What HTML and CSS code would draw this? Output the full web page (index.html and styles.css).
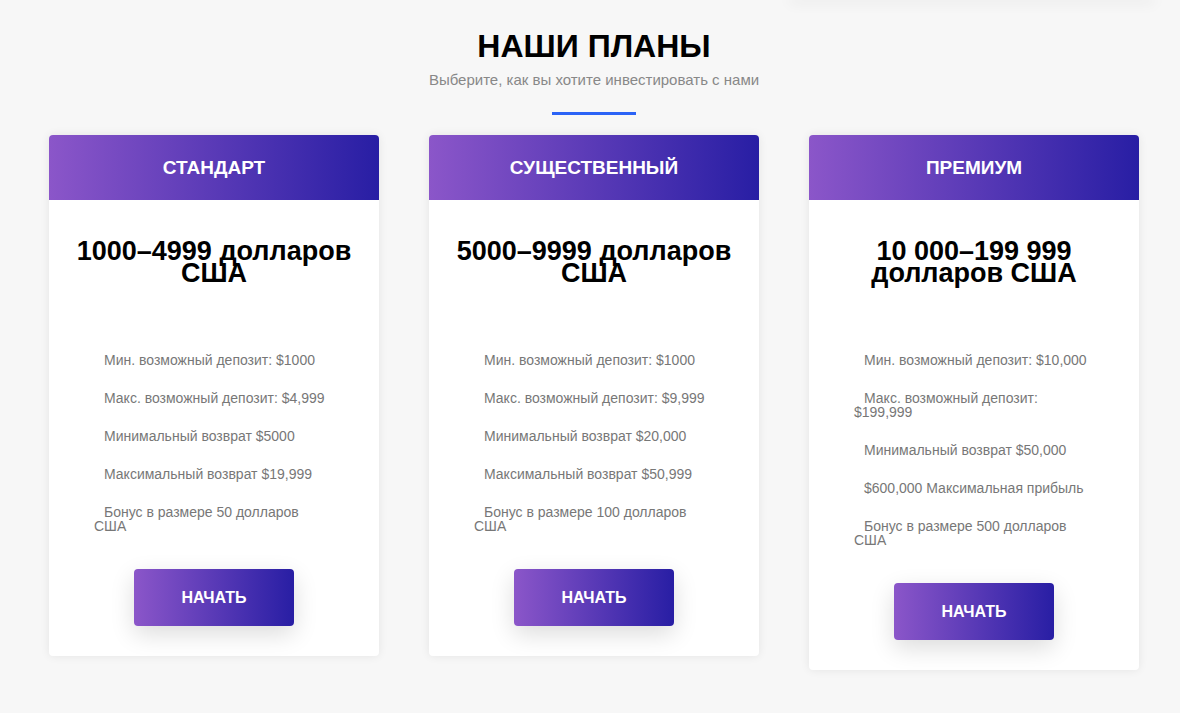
FILE: index.html
```html
<!DOCTYPE html>
<html lang="ru">
<head>
	<meta charset="utf-8">
	<title>Наши планы</title>
	<link rel="stylesheet" href="styles.css">
</head>
<body>

<section class="plans">
	<div class="top-strip"><div class="top-shadow"></div></div>

	<h2 class="plans-title">НАШИ ПЛАНЫ</h2>
	<p class="plans-sub">Выберите, как вы хотите инвестировать с нами</p>
	<div class="plans-line"></div>

	<div class="plans-row">

		<div class="plan-card">
			<div class="plan-head">СТАНДАРТ</div>
			<h3 class="plan-price">1000–4999 долларов США</h3>
			<ul class="plan-list">
				<li>Мин. возможный депозит: $1000</li>
				<li>Макс. возможный депозит: $4,999</li>
				<li>Минимальный возврат $5000</li>
				<li>Максимальный возврат $19,999</li>
				<li>Бонус в размере 50 долларов США</li>
			</ul>
			<a class="plan-btn" href="#">НАЧАТЬ</a>
		</div>

		<div class="plan-card">
			<div class="plan-head">СУЩЕСТВЕННЫЙ</div>
			<h3 class="plan-price">5000–9999 долларов США</h3>
			<ul class="plan-list">
				<li>Мин. возможный депозит: $1000</li>
				<li>Макс. возможный депозит: $9,999</li>
				<li>Минимальный возврат $20,000</li>
				<li>Максимальный возврат $50,999</li>
				<li>Бонус в размере 100 долларов США</li>
			</ul>
			<a class="plan-btn" href="#">НАЧАТЬ</a>
		</div>

		<div class="plan-card">
			<div class="plan-head">ПРЕМИУМ</div>
			<h3 class="plan-price">10 000–199 999 долларов США</h3>
			<ul class="plan-list">
				<li>Мин. возможный депозит: $10,000</li>
				<li>Макс. возможный депозит: $199,999</li>
				<li>Минимальный возврат $50,000</li>
				<li>$600,000 Максимальная прибыль</li>
				<li>Бонус в размере 500 долларов США</li>
			</ul>
			<a class="plan-btn" href="#">НАЧАТЬ</a>
		</div>

	</div>
</section>

</body>
</html>
```

FILE: styles.css
```css
body {
	margin: 0;
	background-color: #f7f7f7;
	font-family: "Liberation Sans", Arial, sans-serif;
}

.plans {
	padding-left: 8px;
	padding-bottom: 40px;
}

/* bottom edge of the block above, only its shadow is visible */
.top-strip {
	display: flex;
	justify-content: flex-end;
	height: 0;
}

.top-shadow {
	width: 360px;
	height: 0;
	margin-right: 28px;
	box-shadow: 0 0 14px 3px rgba(0, 0, 0, 0.07);
}

.plans-title {
	margin: 28px 0 0;
	font-size: 32px;
	line-height: 36px;
	font-weight: bold;
	color: #000;
	text-align: center;
}

.plans-sub {
	margin: 7px 0 0;
	font-size: 15px;
	line-height: 18px;
	color: #888;
	text-align: center;
}

.plans-line {
	width: 84px;
	height: 3px;
	margin: 23px auto 0;
	background-color: #2b63f6;
}

.plans-row {
	display: flex;
	justify-content: center;
	align-items: flex-start;
	gap: 50px;
	margin-top: 20px;
}

.plan-card {
	width: 330px;
	padding-bottom: 30px;
	background-color: #fff;
	border-radius: 4px;
	overflow: hidden;
	box-shadow: 0 0 10px rgba(0, 0, 0, 0.08);
	display: flex;
	flex-direction: column;
}

.plan-head {
	height: 65px;
	display: flex;
	align-items: center;
	justify-content: center;
	background: linear-gradient(to right, #8b56c9, #281ea4);
	color: #fff;
	font-size: 19px;
	font-weight: bold;
}

.plan-price {
	margin: 40px 0 0;
	padding: 0 20px;
	font-size: 27px;
	line-height: 22px;
	font-weight: bold;
	color: #000;
	text-align: center;
}

.plan-list {
	width: 236px;
	margin: 69px 0 0 45px;
	padding: 0;
	list-style: none;
}

.plan-list li {
	font-size: 14px;
	line-height: 14px;
	color: #777;
	text-indent: 10px;
	margin-bottom: 24px;
}

.plan-list li:last-child {
	margin-bottom: 0;
}

.plan-btn {
	align-self: center;
	width: 160px;
	height: 57px;
	margin-top: 36px;
	display: flex;
	align-items: center;
	justify-content: center;
	border-radius: 4px;
	background: linear-gradient(to right, #8b56c9, #281ea4);
	box-shadow: 0 8px 25px rgba(0, 0, 0, 0.14);
	color: #fff;
	font-size: 16px;
	font-weight: bold;
	text-decoration: none;
}
```
